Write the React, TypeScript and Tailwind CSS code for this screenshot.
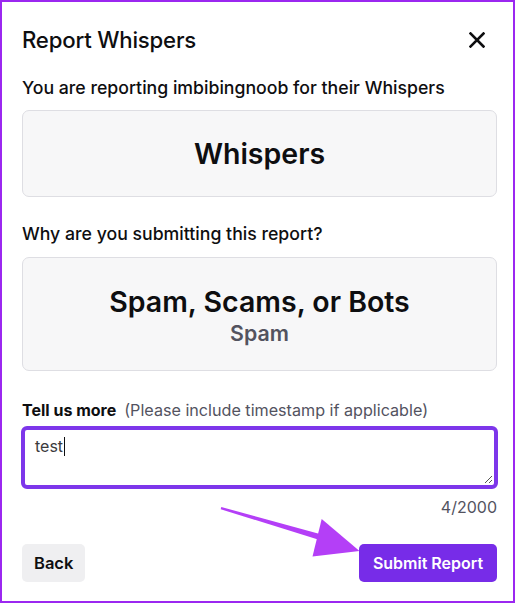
import React from "react";

export default function App() {
  const font = { fontFamily: "Inter, 'Noto Sans', sans-serif" } as React.CSSProperties;
  return (
    <div className="relative w-[515px] h-[603px] bg-white" style={font}>
      <div className="box-border h-full w-full border-2 border-[#9b27f0] pl-[20px] pr-[16px] flex flex-col">
        <div className="mt-[24px] flex h-[28px] items-center justify-between">
          <h1 className="text-[22.2px] font-medium leading-[28px] text-[#0e0e10] tracking-[-0.2px]">Report Whispers</h1>
          <button className="mr-[10px] flex h-[20px] w-[20px] items-center justify-center" aria-label="Close">
            <svg width="16" height="16" viewBox="0 0 16 16">
              <path d="M1.5 1.5 L14.5 14.5 M14.5 1.5 L1.5 14.5" stroke="#0e0e10" strokeWidth="2.6" strokeLinecap="square" fill="none" />
            </svg>
          </button>
        </div>
        <p className="mt-[22px] text-[17.7px] font-medium leading-[24px] text-[#0e0e10]">
          You are reporting imbibingnoob for their Whispers
        </p>
        <div className="mt-[10px] flex h-[87px] items-center justify-center rounded-[7px] border border-[#dedee3] bg-[#f7f7f8]">
          <span className="text-[28.5px] font-semibold leading-[36px] text-[#0e0e10]">Whispers</span>
        </div>
        <p className="mt-[25px] text-[17.7px] font-medium leading-[24px] text-[#0e0e10]">
          Why are you submitting this report?
        </p>
        <div className="mt-[11px] flex h-[114px] flex-col items-center justify-center rounded-[7px] border border-[#dedee3] bg-[#f7f7f8] pt-[6px]">
          <span className="text-[28.5px] font-semibold leading-[32px] text-[#0e0e10]">Spam, Scams, or Bots</span>
          <span className="text-[21.3px] font-semibold leading-[31px] text-[#53535f]">Spam</span>
        </div>
        <div className="mt-[29px] flex items-baseline leading-[20px]">
          <span className="text-[16px] font-bold text-[#0e0e10]">Tell us more</span>
          <span className="ml-[8px] text-[16.15px] text-[#53535f]">(Please include timestamp if applicable)</span>
        </div>
        <div className="relative mt-[6px] -mx-px h-[63px] rounded-[6px] border-4 border-[#7d36ea] px-[10px] pt-[3px]">
          <span className="text-[16px] leading-[20px] text-[#3a3a3d]">test</span>
          <span className="ml-[1px] inline-block h-[19px] w-px translate-y-[4px] bg-[#0e0e10]" />
          <svg className="absolute bottom-[1px] right-[1px]" width="10" height="10" viewBox="0 0 10 10">
            <path d="M9 2 L2 9 M9 6 L6 9" stroke="#555" strokeWidth="1" fill="none" />
          </svg>
        </div>
        <div className="mt-[8px] text-right text-[16px] leading-[20px] text-[#53535f]">4/2000</div>
        <div className="mt-[27px] flex items-center justify-between">
          <button className="h-[38px] rounded-[5px] bg-[#efeff1] px-[12px] text-[16.5px] font-semibold text-[#0e0e10]">
            Back
          </button>
          <button className="h-[38px] w-[138px] rounded-[5px] bg-[#772ce8] text-[16px] font-semibold text-white">
            Submit Report
          </button>
        </div>
      </div>
      <svg className="pointer-events-none absolute left-0 top-0" width="515" height="603" viewBox="0 0 515 603">
        <polygon points="221.3,507 220.7,509.2 329.2,543 330.8,537" fill="#b43ff7" />
        <polygon points="321.7,519 359.5,551 312.5,556.5" fill="#b43ff7" />
      </svg>
    </div>
  );
}
